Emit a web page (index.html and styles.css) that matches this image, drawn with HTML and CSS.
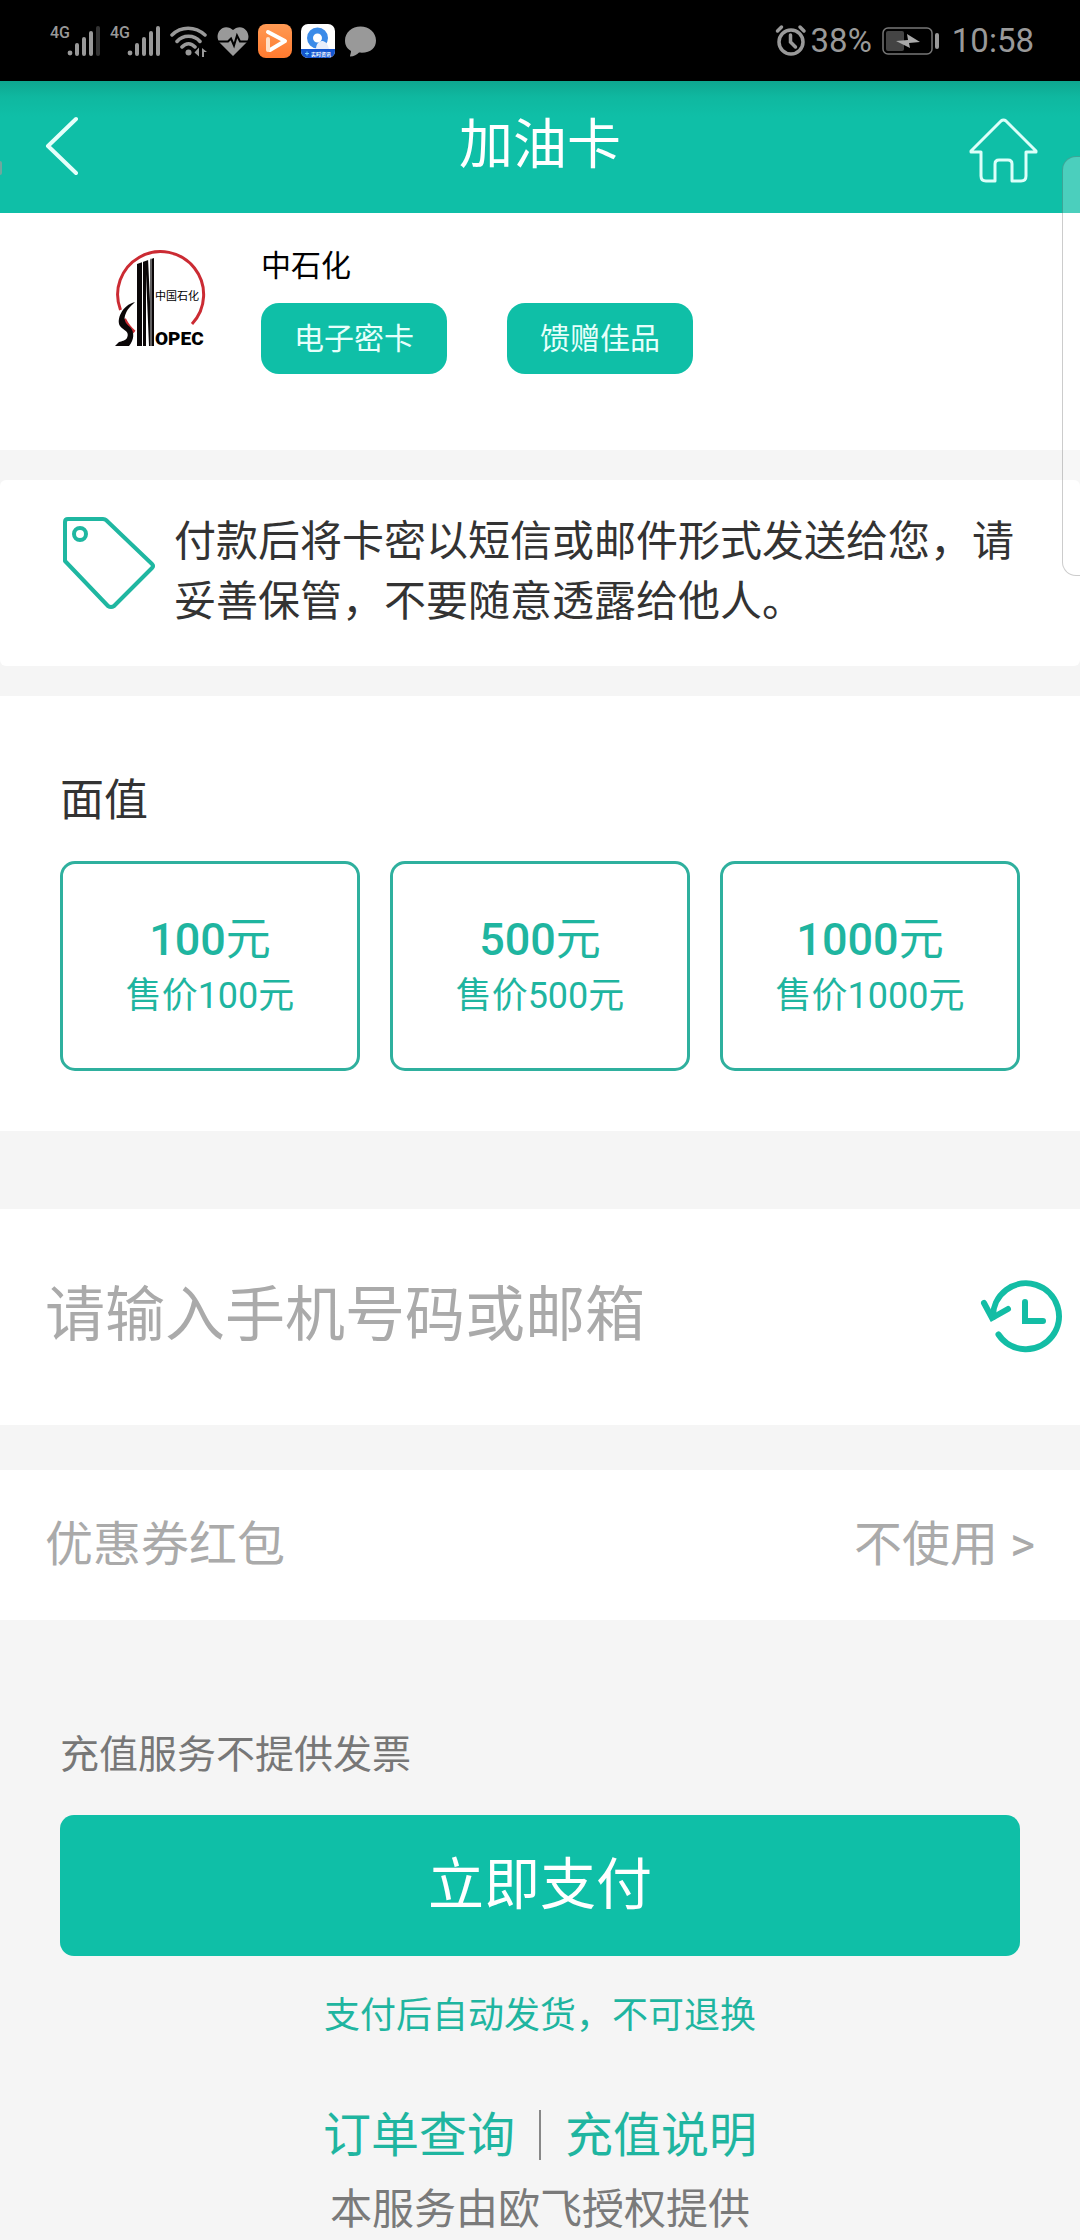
FILE: index.html
```html
<!DOCTYPE html>
<html lang="zh-CN">
<head>
    <meta charset="UTF-8">
    <meta name="viewport" content="width=device-width, initial-scale=1.0">
    <title>加油卡</title>
    <link rel="stylesheet" href="styles.css">
</head>
<body>
    <!-- Status bar -->
    <div class="status-bar">
        <div class="status-icons">
            <svg width="51" height="34" viewBox="0 0 51 34" fill="#999">
                <text class="net-label" x="0" y="14">4G</text>
                <circle cx="20" cy="29" r="2.4"/>
                <path d="M27 21v9M34 15v15M41 9v21" stroke="#999" stroke-width="4" stroke-linecap="round"/>
                <path d="M48 4v26" stroke="#333" stroke-width="4" stroke-linecap="round"/>
            </svg>
            <svg width="51" height="34" viewBox="0 0 51 34" fill="#999">
                <text class="net-label" x="0" y="14">4G</text>
                <circle cx="20" cy="29" r="2.4"/>
                <path d="M27 21v9M34 15v15M41 9v21M48 4v26" stroke="#999" stroke-width="4" stroke-linecap="round"/>
            </svg>
            <svg width="38" height="34" viewBox="0 0 38 34" fill="none" stroke="#999" stroke-width="3.500" stroke-linecap="round">
                <path d="M2 11C11 2 25 2 35 11M7 17.500c6-7 17-7 23 0M12 23c4-4.500 9-4.500 13 0"/>
                <circle cx="18.500" cy="28.500" r="3" fill="#999" stroke="none"/>
                <path d="M29 23.500v9l-4.500-4zM32 24l5 4h-3v5h-2z" fill="#999" stroke="none"/>
            </svg>
            <svg width="32" height="34" viewBox="0 0 32 34">
                <path d="M16 32L2.500 18.500C-3 11 4 0 13 4l3 2 3-2c9-4 16 7 10.500 14.500z" fill="#999"/>
                <path d="M0 17.500h11l3-3 3 7 3-10 3 6h9" fill="none" stroke="#000" stroke-width="2"/>
            </svg>
            <svg width="34" height="34" viewBox="0 0 34 34">
                <defs>
                    <linearGradient id="play" x1="0" y1="0" x2="0" y2="1">
                        <stop offset="0" stop-color="#ff9a54"/>
                        <stop offset="1" stop-color="#ff7a2f"/>
                    </linearGradient>
                </defs>
                <rect width="34" height="34" rx="8" fill="url(#play)"/>
                <path d="M10 8l17 9-15 9" fill="none" stroke="#fff" stroke-width="4" stroke-linecap="round" stroke-linejoin="round"/>
                <path d="M10 15v11" stroke="#ffe0c8" stroke-width="4" stroke-linecap="round"/>
            </svg>
            <svg width="34" height="34" viewBox="0 0 34 34">
                <rect width="34" height="34" rx="7" fill="#fff"/>
                <circle cx="16.500" cy="14" r="7.500" fill="none" stroke="#3b8be8" stroke-width="6"/>
                <path d="M15 25c0-9 10-12 13 0z" fill="#e8eefa"/>
                <path d="M0 25h34v2a7 7 0 0 1-7 7H7a7 7 0 0 1-7-7z" fill="#1456cf"/>
                <path d="M4 29.500h4M6 27.500v4" stroke="#6fd0ff" stroke-width="1"/>
                <text class="badge-label" x="10" y="32">实时资讯</text>
            </svg>
            <svg width="34" height="34" viewBox="0 0 34 34">
                <path d="M16.500 2.500C8 2.500 1 8.500 1 16.500c0 5 2 8 6 10.500 0 2-1 4-1 5.500 4 0 7-2 9-4 11 1 17-4 17-12S25 2.500 16.500 2.500z" fill="#999"/>
            </svg>
        </div>
        <div class="status-info">
            <svg width="32" height="34" viewBox="0 0 32 34" fill="none" stroke="#999" stroke-width="3.500" stroke-linecap="round">
                <circle cx="16" cy="18" r="12"/>
                <path d="M15.500 11v7l5 5M2.500 7l4-4M29 7l-4-4"/>
            </svg>
            <span>38%</span>
            <svg class="battery" width="58" height="28" viewBox="0 0 58 28">
                <rect x="1" y="1" width="49" height="26" rx="5" fill="none" stroke="#777" stroke-width="1.500"/>
                <rect x="4" y="4" width="18" height="20" rx="2" fill="#444"/>
                <path d="M14 14l12-1-1-6 13 8-11 1 1 5z" fill="#aaa"/>
                <rect x="53" y="6" width="4" height="16" rx="2" fill="#999"/>
            </svg>
            <span>10:58</span>
        </div>
    </div>

    <!-- Title bar -->
    <header class="header">
        <button class="icon-button" aria-label="返回">
            <svg width="36" height="64" viewBox="0 0 36 64" fill="none" stroke="#e6fffb" stroke-width="4" stroke-linecap="round" stroke-linejoin="round">
                <path d="M34 4L6 31l28 27"/>
            </svg>
        </button>
        <h1>加油卡</h1>
        <button class="icon-button home" aria-label="首页">
            <svg width="69" height="66" viewBox="0 0 69 66" fill="none" stroke="#dcfff9" stroke-width="3" stroke-linejoin="round">
                <path d="M2 34L32 4q2.500-2 5 0l30 30v1H57v24q0 5-5 5H43V47q0-4-4-4h-9q-4 0-4 4v17h-9q-5 0-5-5V35H2z"/>
            </svg>
        </button>
    </header>

    <!-- Brand -->
    <section class="brand">
        <svg class="logo" width="96" height="100" viewBox="0 0 96 100" role="img" aria-label="中石化">
            <path d="M8.500 60A43 43 0 1 1 80 74M12.500 69q4 8 10 13" fill="none" stroke="#cb2b33" stroke-width="3"/>
            <path d="M25 14l17-6v88H25z" fill="#0b0708"/>
            <path d="M30.500 10v86" stroke="#fff" stroke-width="1"/>
            <path d="M39 8v88" stroke="#bbb" stroke-width="1"/>
            <path d="M34 24l3 72h-3zM36 8h2v44z" fill="#fff"/>
            <path d="M23 52C10 55 4 70 8 76c4 5 10 5 7 12-2 3-5 3-8 4l-4 4h14c5-6 6-14 1-19-5-4-7-8-4-14 2-5 5-7 9-11z" fill="#0b0708"/>
            <text class="logo-cn" x="43" y="50">中国石化</text>
            <text class="logo-en" x="43" y="95">OPEC</text>
        </svg>
        <div class="brand-info">
            <h2>中石化</h2>
            <div class="tags">
                <span class="tag">电子密卡</span>
                <span class="tag">馈赠佳品</span>
            </div>
        </div>
    </section>

    <!-- Notice -->
    <section class="notice">
        <svg width="96" height="96" viewBox="0 0 96 96" fill="none" stroke="#1fb7a1" stroke-width="4" stroke-linejoin="round">
            <path d="M8 3h35q2 0 3 1l46 44q2 2 0 4L54 90q-3 2-6 0L5 45V6q0-3 3-3z"/>
            <circle cx="20" cy="18" r="6"/>
        </svg>
        <p>付款后将卡密以短信或邮件形式发送给您，请妥善保管，不要随意透露给他人。</p>
    </section>

    <!-- Card values -->
    <section class="values">
        <h3>面值</h3>
        <div class="value-list">
            <button class="value-card">
                <span class="amount"><strong>100</strong>元</span>
                <span>售价100元</span>
            </button>
            <button class="value-card">
                <span class="amount"><strong>500</strong>元</span>
                <span>售价500元</span>
            </button>
            <button class="value-card">
                <span class="amount"><strong>1000</strong>元</span>
                <span>售价1000元</span>
            </button>
        </div>
    </section>

    <!-- Phone or email -->
    <section class="account">
        <input type="text" placeholder="请输入手机号码或邮箱" aria-label="手机号码或邮箱">
        <button class="icon-button" aria-label="历史记录">
            <svg width="84" height="78" viewBox="0 0 84 78" fill="none" stroke="#13bda5" stroke-width="6" stroke-linecap="round">
                <path d="M13 41A33 33 0 1 1 18.500 58.500"/>
                <path d="M4 27l8 15 16-9"/>
                <path d="M45 26v19h18"/>
            </svg>
        </button>
    </section>

    <!-- Coupon -->
    <button class="coupon">
        <span>优惠券红包</span>
        <span>不使用 &gt;</span>
    </button>

    <footer class="footer">
        <p class="invoice">充值服务不提供发票</p>
        <button class="pay">立即支付</button>
        <p class="tip">支付后自动发货，不可退换</p>
        <nav class="links">
            <a href="#">订单查询</a>
            <a href="#">充值说明</a>
        </nav>
        <p class="provider">本服务由欧飞授权提供</p>
    </footer>

    <!-- Edge handles floating over the page -->
    <div class="edge-panel"></div>
    <div class="edge-dot"></div>
</body>
</html>
```
FILE: styles.css
```css
* {
    box-sizing: border-box;
}
body {
    position: relative;
    margin: 0;
    font-family: Roboto, "Noto Sans CJK SC", sans-serif;
    background-color: #f5f5f5;
    color: #333;
    overflow-x: hidden;
}
h1, h2, h3, p {
    margin: 0;
    font-weight: normal;
}
button, input {
    font-family: inherit;
    border: none;
    padding: 0;
    background: none;
}
button {
    cursor: pointer;
}
svg {
    display: block;
    flex-shrink: 0;
}

/* Status bar */
.status-bar {
    display: flex;
    justify-content: space-between;
    align-items: center;
    height: 81px;
    padding: 0 46px 0 50px;
    background-color: #000;
    color: #999;
    font-size: 33px;
    line-height: 40px;
}
.status-icons, .status-info {
    display: flex;
    align-items: center;
}
.status-icons {
    gap: 9px;
}
.status-info {
    gap: 4px;
}
.battery {
    margin: 0 8px 0 6px;
}
.net-label {
    font-size: 16px;
    font-weight: 500;
}
.badge-label {
    font-size: 5px;
    font-weight: bold;
    fill: #fff;
}

/* Title bar */
.header {
    display: grid;
    grid-template-columns: 1fr auto 1fr;
    align-items: center;
    height: 132px;
    padding: 0 42px;
    background: #0fbfa7 linear-gradient(#0ea790, #0fb8a0 16px, #0fbfa7 36px);
    color: #fff;
}
.header h1 {
    padding-bottom: 2px;
    font-size: 54px;
    line-height: 72px;
}
.header .icon-button {
    justify-self: start;
}
.header .home {
    justify-self: end;
    padding-top: 6px;
}

/* Brand */
.brand {
    display: flex;
    gap: 53px;
    padding: 34px 60px 76px 112px;
    background-color: #fff;
}
.brand h2 {
    padding-top: 1px;
    color: #000;
    font-size: 30px;
    line-height: 36px;
}
.tags {
    display: flex;
    gap: 60px;
    margin-top: 19px;
}
.tag {
    padding: 0 33px;
    border-radius: 18px;
    background-color: #0fbfa7;
    color: #e6fffb;
    font-size: 30px;
    line-height: 71px;
}
.logo {
    margin-top: 3px;
}
.logo-cn {
    font-size: 11px;
}
.logo-en {
    font-size: 19px;
    font-weight: 900;
}

/* Notice */
.notice {
    display: flex;
    gap: 18px;
    margin: 30px 0;
    padding: 32px 48px 34px 60px;
    border-radius: 6px;
    background-color: #fff;
    font-size: 42px;
    line-height: 60px;
}
.notice svg {
    margin-top: 4px;
}

/* Card values */
.values {
    padding: 77px 60px 60px;
    background-color: #fff;
}
.values h3 {
    margin-bottom: 32px;
    font-size: 44px;
    line-height: 56px;
}
.value-list {
    display: grid;
    grid-template-columns: repeat(3, 1fr);
    gap: 30px;
}
.value-card {
    display: flex;
    flex-direction: column;
    align-items: center;
    justify-content: center;
    height: 210px;
    padding-top: 4px;
    border: 3px solid #2fb09e;
    border-radius: 15px;
    color: #1fb5a0;
    font-size: 36px;
    line-height: 56px;
}
.amount {
    font-size: 45px;
}
.amount strong {
    font-weight: 500;
}

/* Phone or email */
.account {
    display: flex;
    align-items: center;
    margin: 78px 0 45px;
    padding: 61px 16px 65px 45px;
    background-color: #fff;
}
.account input {
    flex: 1;
    min-width: 0;
    height: 90px;
    outline: none;
    color: #333;
    font-size: 60px;
}
.account input::placeholder {
    color: #aaa;
    opacity: 1;
}

/* Coupon */
.coupon {
    display: flex;
    justify-content: space-between;
    width: 100%;
    padding: 40px 45px;
    background-color: #fff;
    color: #aaa;
    font-size: 48px;
    line-height: 70px;
}

/* Footer */
.footer {
    padding: 108px 60px 0;
    text-align: center;
}
.invoice {
    color: #777;
    font-size: 39px;
    line-height: 54px;
    text-align: left;
}
.pay {
    width: 100%;
    margin-top: 33px;
    border-radius: 14px;
    background-color: #0fbfa7;
    color: #fff;
    font-size: 56px;
    line-height: 141px;
}
.tip {
    margin-top: 36px;
    color: #1fb5a0;
    font-size: 36px;
    line-height: 48px;
}
.links {
    display: flex;
    justify-content: center;
    margin-top: 70px;
}
.links a {
    padding: 2px 24px 0;
    color: #1fb5a0;
    font-size: 48px;
    line-height: 48px;
    text-decoration: none;
}
.links a + a {
    border-left: 2px solid #888;
}
.provider {
    margin-top: 20px;
    color: #7a7a7a;
    font-size: 42px;
    line-height: 60px;
}

/* Edge handles */
.edge-panel {
    position: absolute;
    top: 156px;
    right: 0;
    width: 18px;
    height: 420px;
    border: 1px solid rgba(0, 0, 0, 0.2);
    border-right: none;
    border-radius: 14px 0 0 14px;
    background-color: rgba(255, 255, 255, 0.25);
}
.edge-dot {
    position: absolute;
    top: 161px;
    left: 0;
    width: 2px;
    height: 14px;
    border-radius: 0 2px 2px 0;
    background-color: #6fa79e;
}
```
